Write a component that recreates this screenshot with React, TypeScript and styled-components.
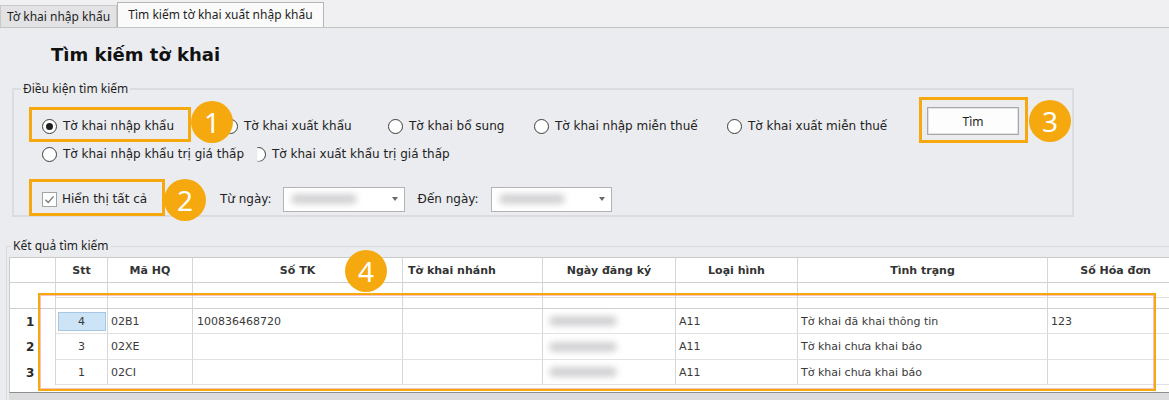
import React from 'react';
import styled, { createGlobalStyle } from 'styled-components';

const GlobalStyle = createGlobalStyle`
  html, body { margin: 0; padding: 0; background: #ebecf0; }
  body { font-family: "DejaVu Sans", sans-serif; overflow: hidden; }
  *, *::before, *::after { box-sizing: border-box; }
`;

const ORANGE = '#f5a90e';

const Page = styled.div`
  position: relative;
  width: 1169px;
  height: 400px;
  overflow: hidden;
  background: #ebecf0;
`;

const TabStrip = styled.div`
  display: flex;
  align-items: flex-end;
  height: 28px;
  border-bottom: 1px solid #c4c4c4;
  background: #f0f0f2;
`;

const Tab = styled.div<{ $active?: boolean; $w: number }>`
  width: ${p => p.$w}px;
  height: ${p => (p.$active ? 25 : 22)}px;
  background: ${p => (p.$active ? '#fafafa' : '#e3e3e5')};
  border: 1px solid ${p => (p.$active ? '#b5b5b5' : '#c9c9c9')};
  border-bottom: none;
  display: flex;
  align-items: center;
  justify-content: center;
  padding-bottom: ${p => (p.$active ? 2 : 0)}px;
  font: 12px "Noto Sans", sans-serif;
  color: #1e1e1e;
  white-space: nowrap;
`;

const Title = styled.h1`
  margin: 15px 0 0 51px;
  height: 24px;
  font: bold 18px/24px "DejaVu Sans", sans-serif;
  color: #111;
`;

const SearchGroup = styled.fieldset`
  margin: 14px 0 0 12px;
  width: 1062px;
  min-width: 0;
  border: 2px solid #dcdcde;
  padding: 10px 53px 3px 28px;
  display: flex;
  justify-content: space-between;
  align-items: flex-start;
`;

const GroupLegend = styled.legend<{ $offset: number }>`
  margin-left: ${p => p.$offset}px;
  padding: 0 2px;
  font: 12px/16px "Noto Sans", sans-serif;
  color: #1e1e1e;
`;

const Options = styled.div`
  display: flex;
  flex-direction: column;
  padding-top: 9px;
`;

const OptionRow = styled.div<{ $h: number; $gap: number }>`
  display: flex;
  align-items: center;
  height: ${p => p.$h}px;
  margin-top: ${p => p.$gap}px;
`;

const RadioItem = styled.label<{ $w?: number }>`
  display: flex;
  align-items: center;
  gap: 6px;
  width: ${p => (p.$w ? `${p.$w}px` : 'auto')};
  flex: none;
  font: 12px "DejaVu Sans", sans-serif;
  color: #222;
  white-space: nowrap;
`;

const RadioCircle = styled.span<{ $checked?: boolean; $clipped?: boolean }>`
  width: 15px;
  height: 15px;
  flex: none;
  border-radius: 50%;
  border: 1.5px solid #3b3b3b;
  background: #fff;
  display: flex;
  align-items: center;
  justify-content: center;
  clip-path: ${p => (p.$clipped ? 'inset(0 0 0 42%)' : 'none')};
  &::after {
    content: '';
    width: 7px;
    height: 7px;
    border-radius: 50%;
    background: ${p => (p.$checked ? '#1f1f1f' : 'transparent')};
  }
`;

const CheckItem = styled.label<{ $w: number }>`
  display: flex;
  align-items: center;
  gap: 5px;
  width: ${p => p.$w}px;
  flex: none;
  font: 12px "DejaVu Sans", sans-serif;
  color: #222;
  white-space: nowrap;
`;

const CheckBox = styled.span`
  width: 15px;
  height: 15px;
  flex: none;
  border: 1px solid #a3a3a3;
  background: #fff;
  display: flex;
  align-items: center;
  justify-content: center;
`;

const FieldLabel = styled.span<{ $ml?: number }>`
  margin-left: ${p => p.$ml ?? 0}px;
  font: 12px "DejaVu Sans", sans-serif;
  color: #222;
  white-space: nowrap;
`;

const DateBox = styled.div<{ $w: number; $ml: number }>`
  width: ${p => p.$w}px;
  height: 25px;
  margin-left: ${p => p.$ml}px;
  background: #fff;
  border: 1px solid #b3b3b5;
  display: flex;
  align-items: center;
  justify-content: space-between;
  padding: 0 6px 0 7px;
`;

const Blur = styled.span<{ $w: number }>`
  display: block;
  width: ${p => p.$w}px;
  height: 10px;
  border-radius: 5px;
  background: #d2d2d4;
  filter: blur(3px);
`;

const Arrow = styled.span`
  width: 0;
  height: 0;
  border-left: 3.5px solid transparent;
  border-right: 3.5px solid transparent;
  border-top: 4px solid #6a6a6a;
`;

const SearchButton = styled.button`
  width: 92px;
  height: 28px;
  background: #fdfdfd;
  border: 1px solid #a9a9a9;
  box-shadow: inset 0 0 0 1px #e2e2e2;
  font: 12px "Noto Sans", sans-serif;
  color: #1e1e1e;
  padding: 0;
`;

const ResultGroup = styled.fieldset`
  margin: 21px 0 0 6px;
  width: 1190px;
  min-width: 0;
  border: 1px solid #d9d9dc;
  border-bottom: none;
  padding: 3px 0 0 2px;
`;

const GridWrap = styled.div`
  height: 136px;
  background: #fff;
  border-top: 1px solid #c9c9c9;
  border-left: 1px solid #c9c9c9;
  border-bottom: 1px solid #8f8f8f;
`;

const ScrollStrip = styled.div`
  height: 8px;
  background: #dcdcde;
`;

const cols = [46, 52, 85, 210, 140, 133, 122, 250, 136];
const colTemplate = cols.map(c => `${c}px`).join(' ');

const GridRow = styled.div<{ $h: number }>`
  display: grid;
  grid-template-columns: ${colTemplate};
  height: ${p => p.$h}px;
`;

const Cell = styled.div<{ $center?: boolean; $line?: string; $pl?: number }>`
  border-right: 1px solid #d7d7d7;
  border-bottom: ${p => (p.$line ? `1px solid ${p.$line}` : 'none')};
  display: flex;
  align-items: center;
  justify-content: ${p => (p.$center ? 'center' : 'flex-start')};
  padding-left: ${p => p.$pl ?? 0}px;
  overflow: hidden;
  white-space: nowrap;
  font: 11px "DejaVu Sans", sans-serif;
  color: #3a3a3a;
`;

const HeadCell = styled(Cell)`
  font: bold 11px "DejaVu Sans", sans-serif;
  color: #333;
`;

const RowNum = styled(Cell)`
  font: bold 12px "DejaVu Sans", sans-serif;
  color: #2a2a2a;
  padding-left: 16px;
`;

const Selected = styled.span`
  width: 48px;
  height: 19px;
  flex: none;
  background: #cde4f7;
  border: 1px solid #a6c6e2;
  display: flex;
  align-items: center;
  justify-content: center;
`;

const Highlight = styled.div<{ $x: number; $y: number; $w: number; $h: number; $thin?: boolean }>`
  position: absolute;
  left: ${p => p.$x}px;
  top: ${p => p.$y}px;
  width: ${p => p.$w}px;
  height: ${p => p.$h}px;
  border: ${p => (p.$thin ? 2.5 : 3)}px solid ${ORANGE};
  box-shadow: ${p => (p.$thin ? 'inset 0 0 0 1px rgba(240, 120, 110, 0.45)' : 'none')};
  pointer-events: none;
`;

const Badge = styled.div<{ $cx: number; $cy: number }>`
  position: absolute;
  left: ${p => p.$cx - 21}px;
  top: ${p => p.$cy - 21}px;
  width: 42px;
  height: 42px;
  border-radius: 50%;
  background: ${ORANGE};
  color: #fff;
  display: flex;
  align-items: center;
  justify-content: center;
  font: 28px/1 "Noto Sans", sans-serif;
`;

const headers = ['', 'Stt', 'Mã HQ', 'Số TK', 'Tờ khai nhánh', 'Ngày đăng ký', 'Loại hình', 'Tình trạng', 'Số Hóa đơn'];

const rows = [
  { n: '1', stt: '4', hq: '02B1', tk: '100836468720', lh: 'A11', tt: 'Tờ khai đã khai thông tin', hd: '123', sel: true, h: 25 },
  { n: '2', stt: '3', hq: '02XE', tk: '', lh: 'A11', tt: 'Tờ khai chưa khai báo', hd: '', sel: false, h: 26 },
  { n: '3', stt: '1', hq: '02CI', tk: '', lh: 'A11', tt: 'Tờ khai chưa khai báo', hd: '', sel: false, h: 25 },
];

const CheckMark = () => (
  <svg width="11" height="11" viewBox="0 0 11 11">
    <path d="M1.5 5.8 L4.2 8.4 L9.6 2.4" fill="none" stroke="#7a7a7a" strokeWidth="1.4" />
  </svg>
);

export default function App() {
  return (
    <>
      <GlobalStyle />
      <Page>
        <TabStrip>
          <Tab $w={117}>Tờ khai nhập khẩu</Tab>
          <Tab $w={207} $active>Tìm kiếm tờ khai xuất nhập khẩu</Tab>
        </TabStrip>

        <Title>Tìm kiếm tờ khai</Title>

        <SearchGroup>
          <GroupLegend $offset={-21}>Điều kiện tìm kiếm</GroupLegend>
          <Options>
            <OptionRow $h={20} $gap={0}>
              <RadioItem $w={181}><RadioCircle $checked />Tờ khai nhập khẩu</RadioItem>
              <RadioItem $w={165}><RadioCircle />Tờ khai xuất khẩu</RadioItem>
              <RadioItem $w={146}><RadioCircle />Tờ khai bổ sung</RadioItem>
              <RadioItem $w={193}><RadioCircle />Tờ khai nhập miễn thuế</RadioItem>
              <RadioItem><RadioCircle />Tờ khai xuất miễn thuế</RadioItem>
            </OptionRow>
            <OptionRow $h={20} $gap={8}>
              <RadioItem $w={209}><RadioCircle />Tờ khai nhập khẩu trị giá thấp</RadioItem>
              <RadioItem><RadioCircle $clipped />Tờ khai xuất khẩu trị giá thấp</RadioItem>
            </OptionRow>
            <OptionRow $h={26} $gap={22}>
              <CheckItem $w={178}><CheckBox><CheckMark /></CheckBox>Hiển thị tất cả</CheckItem>
              <FieldLabel>Từ ngày:</FieldLabel>
              <DateBox $w={122} $ml={11}><Blur $w={66} /><Arrow /></DateBox>
              <FieldLabel $ml={13}>Đến ngày:</FieldLabel>
              <DateBox $w={121} $ml={12}><Blur $w={66} /><Arrow /></DateBox>
            </OptionRow>
          </Options>
          <SearchButton>Tìm</SearchButton>
        </SearchGroup>

        <ResultGroup>
          <GroupLegend $offset={2}>Kết quả tìm kiếm</GroupLegend>
          <GridWrap>
            <GridRow $h={25}>
              {headers.map((h, i) =>
                i === 4 ? (
                  <HeadCell key={i} $line="#d0d0d0" $pl={5}>{h}</HeadCell>
                ) : (
                  <HeadCell key={i} $line="#d0d0d0" $center>{h}</HeadCell>
                )
              )}
            </GridRow>
            <GridRow $h={15}>
              {cols.map((_, i) => (
                <Cell key={i} $line={i === 0 ? undefined : '#e2e2e2'} />
              ))}
            </GridRow>
            <GridRow $h={11}>
              {cols.map((_, i) => (
                <Cell key={i} $line="#cfcfcf" />
              ))}
            </GridRow>
            {rows.map(r => (
              <GridRow key={r.n} $h={r.h}>
                <RowNum>{r.n}</RowNum>
                <Cell $center $line="#e2e2e2">{r.sel ? <Selected>{r.stt}</Selected> : r.stt}</Cell>
                <Cell $line="#e2e2e2" $pl={3}>{r.hq}</Cell>
                <Cell $line="#e2e2e2" $pl={4}>{r.tk}</Cell>
                <Cell $line="#e2e2e2" />
                <Cell $line="#e2e2e2" $pl={6}><Blur $w={68} /></Cell>
                <Cell $line="#e2e2e2" $pl={3}>{r.lh}</Cell>
                <Cell $line="#e2e2e2" $pl={3}>{r.tt}</Cell>
                <Cell $line="#e2e2e2" $pl={3}>{r.hd}</Cell>
              </GridRow>
            ))}
          </GridWrap>
          <ScrollStrip />
        </ResultGroup>

        <Highlight $x={29} $y={107} $w={162} $h={35} />
        <Highlight $x={29} $y={179} $w={136} $h={37} />
        <Highlight $x={919} $y={97} $w={109} $h={46} />
        <Highlight $x={38} $y={293} $w={1118} $h={98} $thin />

        <Badge $cx={212} $cy={122}>1</Badge>
        <Badge $cx={185} $cy={200}>2</Badge>
        <Badge $cx={1050} $cy={121}>3</Badge>
        <Badge $cx={366} $cy={271}>4</Badge>
      </Page>
    </>
  );
}
